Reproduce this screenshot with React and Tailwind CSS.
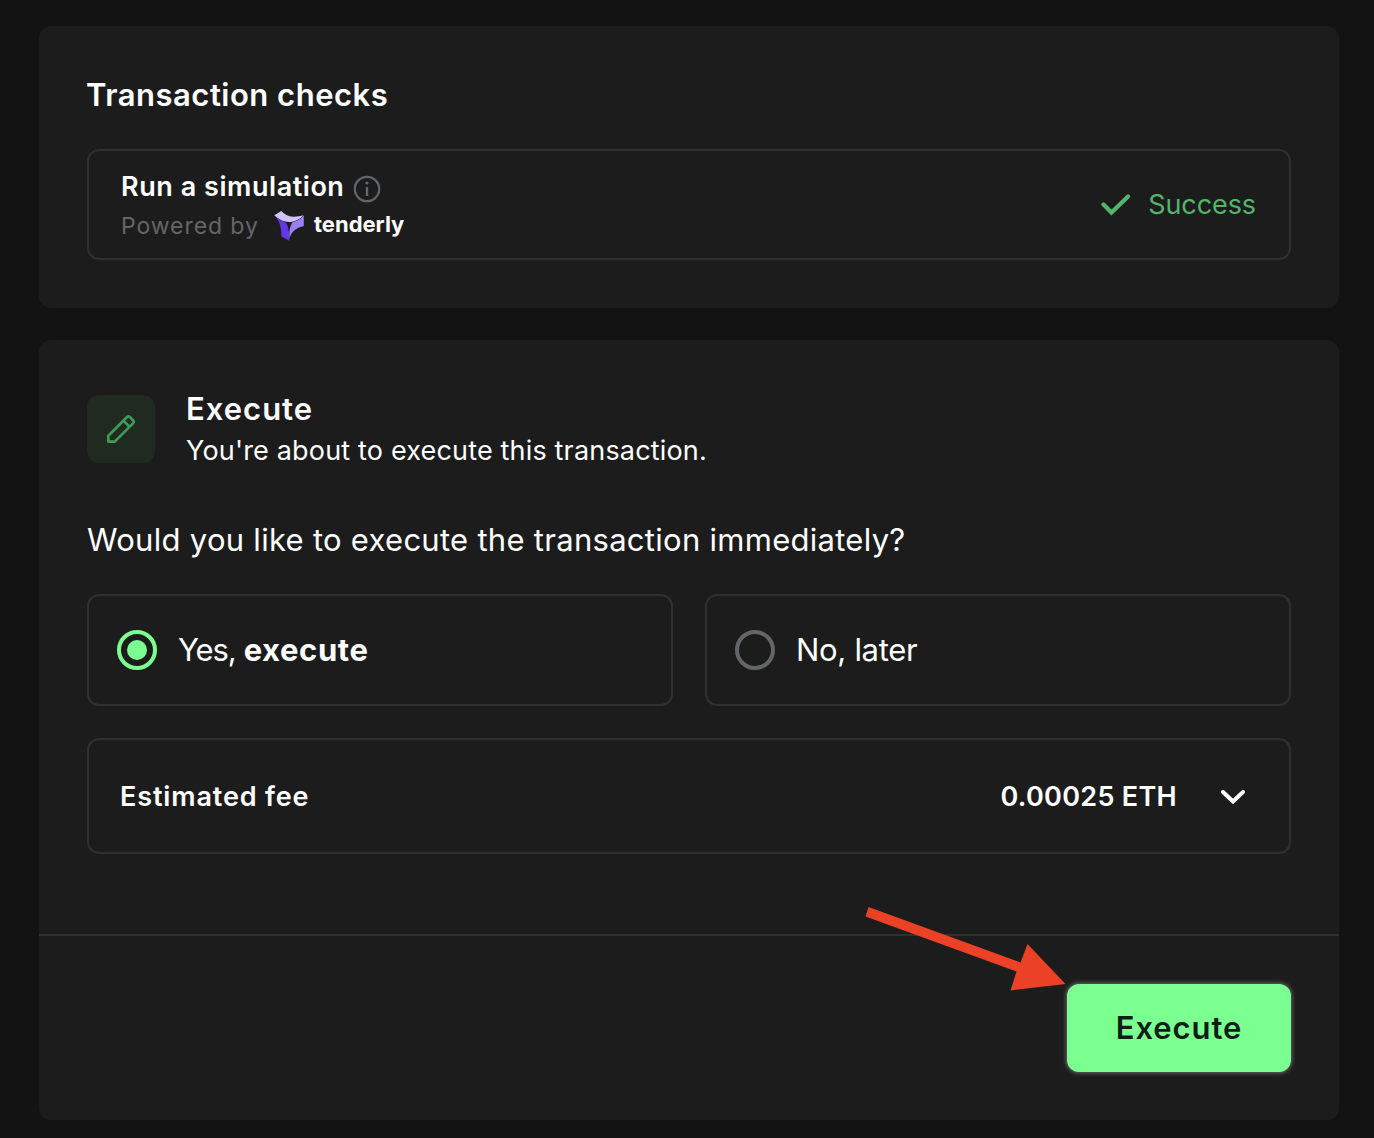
function InfoIcon() {
  return (
    <svg width="28" height="28" viewBox="0 0 28 28" fill="none" className="mt-[3px] ml-[9px]">
      <circle cx="14" cy="14" r="12.2" stroke="#636669" strokeWidth="2.2" />
      <path d="M14 12v9" stroke="#636669" strokeWidth="2.4" />
      <circle cx="14" cy="8" r="1.6" fill="#636669" />
    </svg>
  );
}

function TenderlyLogo() {
  return (
    <svg width="30" height="30" viewBox="0 0 30 30" className="-mt-[1px] mr-[9px]">
      <path d="M0.3 4.3 7.3 0C10.5 3.5 14 5.5 19 5.7 23 5.8 26.500 5 29.600 4.300 25.500 8.800 20 11.200 15 11.100 8.500 10.800 4 7.700 0.300 4.300Z" fill="#d0c3f9" />
      <path d="M0.300 4.500C4 7.900 8 10.300 11.500 11.200 14 14.500 15.200 18.500 15.400 29.800L7.400 25.600C7.400 18 6.500 10.500 0.300 4.500Z" fill="#6237e6" />
      <path d="M29.800 4.500V15C23 16.500 17.500 20 15.500 27.500 15 21 15.500 16 18.500 11.200 22.500 10.300 26.500 8.200 29.800 4.500Z" fill="#9a7ff0" />
    </svg>
  );
}

function Radio({ checked }) {
  return (
    <span className={`flex size-10 items-center justify-center rounded-full border-4 ${checked ? "border-[#7aff90]" : "border-[#636669]"}`}>
      {checked && <span className="size-5 rounded-full bg-[#7aff90]" />}
    </span>
  );
}

export default function App() {
  return (
    <div className="relative h-[1138px] w-[1374px] overflow-hidden bg-[#131313] pt-[26px] pl-[39px] font-['Inter',sans-serif] text-white">
      <section className="h-[282px] w-[1300px] rounded-xl bg-[#1c1c1c] px-12 pt-12">
        <h2 className="-ml-px text-[31px] leading-[42px] font-semibold tracking-[0.5px]">Transaction checks</h2>
        <div className="mt-[33px] flex h-[111px] justify-between rounded-xl border-2 border-[#303033] pr-[33px] pl-8">
          <div className="pt-[16px]">
            <div className="flex h-10 items-center">
              <span className="text-[27px] font-semibold tracking-[0.55px]">Run a simulation</span>
              <InfoIcon />
            </div>
            <div className="-mt-px flex h-10 items-center">
              <span className="w-[153px] text-[23px] tracking-[0.92px] text-[#636669]">Powered by</span>
              <TenderlyLogo />
              <span className="-mt-[3px] ml-px text-[22px] font-bold">tenderly</span>
            </div>
          </div>
          <div className="flex items-center pt-0.5 text-[#52b56a]">
            <svg width="30" height="22" viewBox="0 0 30 22" fill="none" className="-mt-[2px] mr-[17px]">
              <path d="M2.500 10.500 10.500 18.500 27 2.500" stroke="currentColor" strokeWidth="4.200" strokeLinecap="round" />
            </svg>
            <span className="text-[27px] tracking-[-0.08px]">Success</span>
          </div>
        </div>
      </section>

      <section className="mt-8 h-[780px] w-[1300px] rounded-xl bg-[#1c1c1c]">
        <div className="h-[594px] px-12 pt-12">
          <div className="flex">
            <div className="mt-[7px] mr-8 flex size-[68px] items-center justify-center rounded-xl bg-[#202a20]">
              <svg width="30" height="30" viewBox="0 0 30 30" fill="none" stroke="#3f9a58" strokeWidth="2.700" strokeLinejoin="round">
                <path d="M2.300 27.600V21.700L20.800 3.200Q22.400 1.600 24 3.200L27 6.200Q28.600 7.800 27 9.400L8.700 27.600ZM17.500 6.600 23.500 12.700" />
              </svg>
            </div>
            <div>
              <h2 className="mt-px -ml-px text-[31px] leading-10 font-semibold tracking-[1px]">Execute</h2>
              <p className="mt-0.5 -ml-px text-[27px] leading-10 tracking-[0.17px]">You're about to execute this transaction.</p>
            </div>
          </div>
          <p className="mt-[49px] text-[31px] leading-10 tracking-[0.28px]">Would you like to execute the transaction immediately?</p>
          <div className="mt-[34px] grid grid-cols-2 gap-8">
            <div className="flex h-28 items-center gap-[21px] rounded-xl border-2 border-[#303033] pl-7 text-[31px]">
              <Radio checked />
              <span className="flex gap-[8px]">
                <span className="tracking-[-1.100px]">Yes,</span>
                <b className="tracking-[0.6px]">execute</b>
              </span>
            </div>
            <div className="flex h-28 items-center gap-[21px] rounded-xl border-2 border-[#303033] pl-7 text-[31px] tracking-[-0.3px]">
              <Radio />
              <span>No, later</span>
            </div>
          </div>
          <div className="mt-8 flex h-[116px] items-center rounded-xl border-2 border-[#303033] pr-[43px] pl-[31px] text-[27px] font-semibold">
            <span className="grow pt-0.5 tracking-[0.86px]">Estimated fee</span>
            <span className="mr-[43px] pt-0.5 tracking-[0.3px]">0.00025 ETH</span>
            <svg width="26" height="16" viewBox="0 0 26 16" fill="none" className="mt-px">
              <path d="M3 3 13 12.500 23 3" stroke="white" strokeWidth="4" strokeLinecap="round" />
            </svg>
          </div>
        </div>
        <div className="flex justify-end border-t-2 border-[#303033] pt-12 pr-12">
          <button className="h-[88px] w-56 rounded-xl bg-[#7aff90] text-[31px] font-semibold tracking-[0.9px] text-[#0b1f14] shadow-[0_0_4px_1px_rgba(255,255,255,0.35)]">Execute</button>
        </div>
      </section>

      <svg className="absolute top-[900px] left-[860px]" width="210" height="96" viewBox="860 900 210 96">
        <path d="M868.500 907 1020.500 962.500 1027.500 944 1065.500 984 1010.500 990.500 1016.500 971.500 865.500 916.500Z" fill="#ea4127" />
      </svg>
    </div>
  );
}
